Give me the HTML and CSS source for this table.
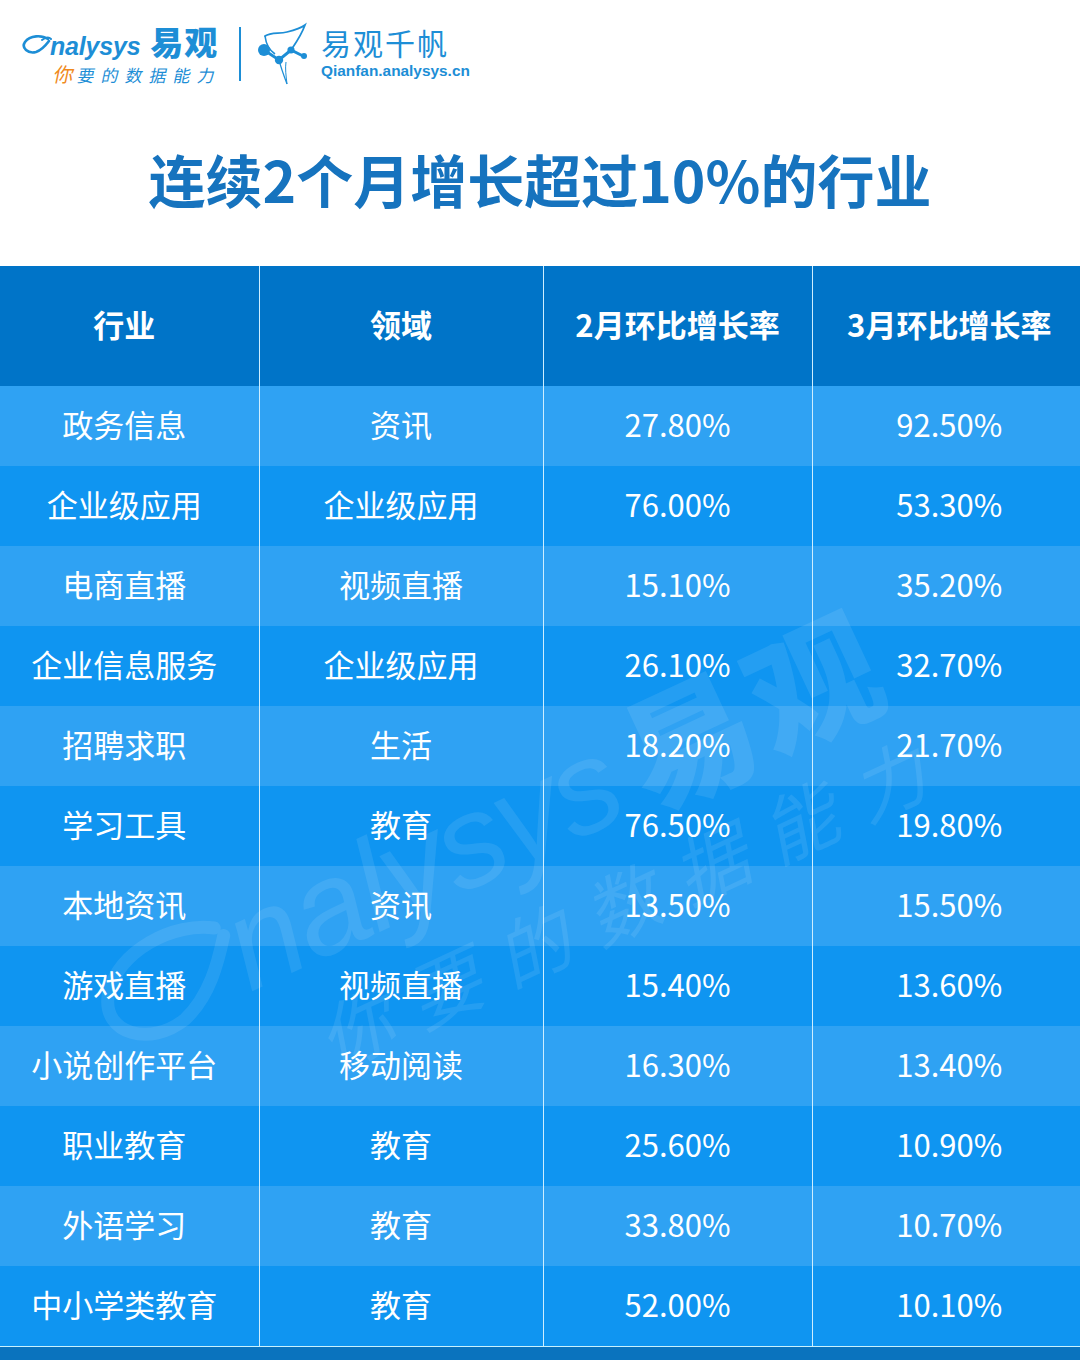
FILE: index.html
```html
<!DOCTYPE html>
<html lang="zh-CN">
<head>
<meta charset="utf-8">
<title>连续2个月增长超过10%的行业</title>
<link rel="stylesheet" href="styles.css">
</head>
<body>
<div class="page">
  <header class="brand">
    <div class="brand-left">
      <div class="brand-line1">
        <svg class="swoosh" width="30" height="24" viewBox="0 0 30 24">
          <path d="M26 6 C 20 2, 8 2, 3 9 C -1 15, 6 21, 14 19 C 20 17, 24 12, 27 8" fill="none" stroke="#1d8ed6" stroke-width="2.6" stroke-linecap="round"/>
          <path d="M20 7 C 24 4, 27 4, 29 6" fill="none" stroke="#1d8ed6" stroke-width="2" stroke-linecap="round"/>
        </svg>
        <span class="analysys">nalysys</span>
        <span class="yiguan">易观</span>
      </div>
      <div class="brand-line2"><span class="ni">你</span>要的数据能力</div>
    </div>
    <div class="divider"></div>
    <svg class="qf-icon" width="52" height="64" viewBox="0 0 52 64">
      <path d="M8 14 C 14 10, 22 12, 30 10 C 38 8, 44 6, 48 3 C 44 14, 38 22, 34 28" fill="none" stroke="#1d8ed6" stroke-width="1.8" stroke-linecap="round"/>
      <path d="M8 14 C 9 22, 12 28, 18 32" fill="none" stroke="#1d8ed6" stroke-width="1.6"/>
      <path d="M22 38 C 24 46, 27 54, 30 62" fill="none" stroke="#1d8ed6" stroke-width="1.2"/>
      <path d="M29 40 C 28 46, 29 54, 30 62" fill="none" stroke="#1d8ed6" stroke-width="1"/>
      <polyline points="7,28 22,38 34,28 46,34" fill="none" stroke="#1d8ed6" stroke-width="3"/>
      <circle cx="7" cy="28" r="6" fill="#1d8ed6"/>
      <circle cx="22" cy="38" r="4.2" fill="#1d8ed6"/>
      <circle cx="34" cy="28" r="3.6" fill="#1d8ed6"/>
      <circle cx="47" cy="34" r="3" fill="#1d8ed6"/>
    </svg>
    <div class="brand-right">
      <div class="qf-name">易观千帆</div>
      <div class="qf-url">Qianfan.analysys.cn</div>
    </div>
  </header>

  <h1 class="title">连续2个月增长超过10%的行业</h1>

  <div class="table-wrap">
    <table class="data">
      <colgroup>
        <col class="c1"><col class="c2"><col class="c3"><col class="c4">
      </colgroup>
      <thead>
        <tr><th>行业</th><th>领域</th><th>2月环比增长率</th><th>3月环比增长率</th></tr>
      </thead>
      <tbody>
        <tr><td>政务信息</td><td>资讯</td><td>27.80%</td><td>92.50%</td></tr>
        <tr><td>企业级应用</td><td>企业级应用</td><td>76.00%</td><td>53.30%</td></tr>
        <tr><td>电商直播</td><td>视频直播</td><td>15.10%</td><td>35.20%</td></tr>
        <tr><td>企业信息服务</td><td>企业级应用</td><td>26.10%</td><td>32.70%</td></tr>
        <tr><td>招聘求职</td><td>生活</td><td>18.20%</td><td>21.70%</td></tr>
        <tr><td>学习工具</td><td>教育</td><td>76.50%</td><td>19.80%</td></tr>
        <tr><td>本地资讯</td><td>资讯</td><td>13.50%</td><td>15.50%</td></tr>
        <tr><td>游戏直播</td><td>视频直播</td><td>15.40%</td><td>13.60%</td></tr>
        <tr><td>小说创作平台</td><td>移动阅读</td><td>16.30%</td><td>13.40%</td></tr>
        <tr><td>职业教育</td><td>教育</td><td>25.60%</td><td>10.90%</td></tr>
        <tr><td>外语学习</td><td>教育</td><td>33.80%</td><td>10.70%</td></tr>
        <tr><td>中小学类教育</td><td>教育</td><td>52.00%</td><td>10.10%</td></tr>
      </tbody>
    </table>
    <div class="watermark" aria-hidden="true">
      <div class="wm-line1">
        <svg class="wm-swoosh" width="170" height="130" viewBox="0 0 30 24">
          <path d="M26 6 C 20 2, 8 2, 3 9 C -1 15, 6 21, 14 19 C 20 17, 24 12, 27 8" fill="none" stroke="rgba(255,255,255,0.09)" stroke-width="2.4" stroke-linecap="round"/>
        </svg><span class="wm-en">nalysys</span><span class="wm-cn">易观</span>
      </div>
      <div class="wm-line2">你要的数据能力</div>
    </div>
  </div>
  <div class="footer-band"></div>
</div>
</body>
</html>
```

FILE: styles.css
```css
html, body {
  margin: 0;
  padding: 0;
  background: #ffffff;
}

body {
  font-family: "Noto Sans CJK SC", "Noto Sans", sans-serif;
}

.page {
  width: 1080px;
  height: 1360px;
  overflow: hidden;
  background: #ffffff;
}

/* ---------- brand header ---------- */
.brand {
  height: 110px;
  box-sizing: border-box;
  padding: 22px 0 0 22px;
  display: flex;
  align-items: flex-start;
  color: #1d8ed6;
}

.brand-left {
  display: flex;
  flex-direction: column;
  width: 200px;
}

.brand-line1 {
  display: flex;
  align-items: flex-end;
  height: 38px;
}

.swoosh {
  margin-bottom: 3px;
  margin-right: -2px;
}

.analysys {
  font-family: "Liberation Sans", Arial, sans-serif;
  font-size: 25px;
  font-weight: 700;
  font-style: italic;
  letter-spacing: -0.2px;
  color: #1d8ed6;
  line-height: 28px;
}

.yiguan {
  font-family: "Noto Sans CJK SC", sans-serif;
  font-weight: 900;
  font-size: 33px;
  line-height: 38px;
  margin-left: 10px;
  color: #1d8ed6;
  letter-spacing: 1px;
  white-space: nowrap;
}

.brand-line2 {
  font-family: "Noto Sans CJK SC", sans-serif;
  font-size: 17px;
  letter-spacing: 7px;
  color: #1d8ed6;
  margin: 3px 0 0 32px;
  line-height: 22px;
  white-space: nowrap;
  transform: skewX(-12deg);
}

.ni {
  color: #f08a1c;
  font-size: 20px;
  letter-spacing: 4px;
}

.divider {
  width: 2px;
  height: 54px;
  background: #1d8ed6;
  margin: 5px 0 0 17px;
}

.qf-icon {
  margin: 0 0 0 16px;
}

.brand-right {
  display: flex;
  flex-direction: column;
  margin-left: 12px;
  padding-top: 2px;
}

.qf-name {
  font-family: "Noto Sans CJK SC", sans-serif;
  font-size: 30px;
  line-height: 36px;
  letter-spacing: 2px;
  color: #1d8ed6;
}

.qf-url {
  font-family: "Liberation Sans", Arial, sans-serif;
  font-weight: bold;
  font-size: 15.4px;
  line-height: 18px;
  margin-top: 2px;
  color: #1d8ed6;
}

/* ---------- title ---------- */
.title {
  margin: 0;
  height: 156px;
  box-sizing: border-box;
  padding-top: 35px;
  text-align: center;
  font-family: "Noto Sans CJK SC", sans-serif;
  font-weight: 700;
  font-size: 57px;
  line-height: 66px;
  color: #1673be;
  letter-spacing: 0;
}

/* ---------- table ---------- */
.table-wrap {
  position: relative;
  overflow: hidden;
}

.data {
  width: 1080px;
  border-collapse: collapse;
  table-layout: fixed;
  color: #ffffff;
}

.data col.c1 { width: 259px; }
.data col.c2 { width: 284px; }
.data col.c3 { width: 269px; }
.data col.c4 { width: 268px; }

.data th,
.data td {
  padding: 0 0 5px 0;
  text-align: center;
  vertical-align: middle;
  border-left: 1px solid #cdeeff;
}

.data th:first-child,
.data td:first-child {
  border-left: none;
  padding-right: 10px;
}

.data th:last-child,
.data td:last-child {
  padding-left: 6px;
}

.data thead tr {
  background: #0074c8;
  height: 120px;
}

.data th {
  font-weight: 700;
  font-size: 31px;
  line-height: 40px;
}

.data tbody tr {
  height: 80px;
}

.data tbody tr:nth-child(odd) {
  background: #2fa2f3;
}

.data tbody tr:nth-child(even) {
  background: #0f95f1;
}

.data td {
  font-size: 31px;
  line-height: 40px;
  font-weight: 400;
}

/* ---------- watermark overlay ---------- */
.watermark {
  position: absolute;
  left: 70px;
  top: 470px;
  width: 900px;
  transform: rotate(-25deg);
  transform-origin: 50% 50%;
  color: rgba(255, 255, 255, 0.09);
  pointer-events: none;
  white-space: nowrap;
}

.wm-line1 {
  display: flex;
  align-items: flex-end;
  height: 160px;
}

.wm-swoosh {
  margin-right: -20px;
  margin-bottom: 6px;
}

.wm-en {
  font-family: "Liberation Sans", Arial, sans-serif;
  font-style: italic;
  font-size: 130px;
  line-height: 150px;
  letter-spacing: -2px;
}

.wm-cn {
  font-family: "Noto Sans CJK SC", sans-serif;
  font-weight: 900;
  font-size: 130px;
  line-height: 160px;
  letter-spacing: 6px;
  margin-left: 20px;
}

.wm-line2 {
  font-family: "Noto Sans CJK SC", sans-serif;
  font-size: 74px;
  line-height: 90px;
  letter-spacing: 24px;
  margin-left: 200px;
  transform: skewX(-14deg);
}

/* ---------- footer ---------- */
.footer-band {
  border-top: 1px solid #c8f2ff;
  height: 13px;
  background: #0a73be;
}
```
